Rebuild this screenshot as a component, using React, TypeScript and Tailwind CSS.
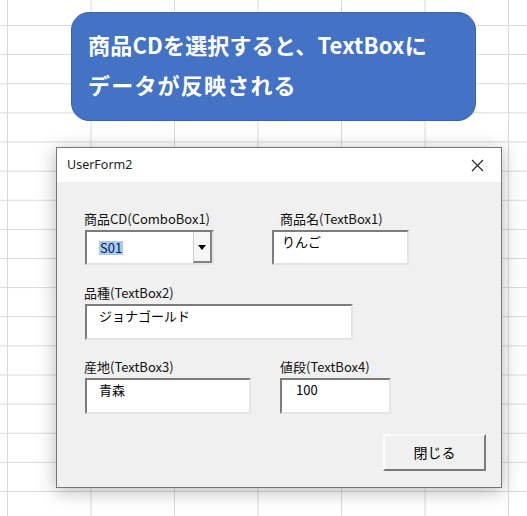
import React from 'react'

const jp = { fontFamily: '"Noto Sans CJK JP", "Noto Sans", sans-serif' }

// Sunken VBA-style textbox frame
function TextBox({ width, value, offset, height = 35 }: { width: number; value: string; offset: number; height?: number }) {
  return (
    <div
      className="border-2 border-[#e4e4e4] border-t-[#7c7c7c] border-l-[#7c7c7c] bg-white text-[13px] leading-[16px] text-black pt-[2px]"
      style={{ width, height, paddingLeft: offset }}
    >
      {value}
    </div>
  )
}

function Label({ children }: { children: React.ReactNode }) {
  return <div className="text-[13px] leading-[16px] text-[#111] whitespace-nowrap">{children}</div>
}

export default function App(): React.JSX.Element {
  return (
    <div
      className="flex flex-col w-[527px] h-[516px] overflow-hidden bg-white bg-[linear-gradient(to_right,#d9d9d9_1px,transparent_1px),linear-gradient(to_bottom,#d9d9d9_1px,transparent_1px)] bg-[length:83.5px_29.13px] bg-[position:7px_25px]"
      style={jp}
    >
      {/* Callout */}
      <div className="ml-[71px] mt-[12px] w-[405px] h-[109px] shrink-0 rounded-[18px] bg-[#4472c4] border border-[#3a63ad] pl-[16px] pt-[11px] text-white font-bold text-[22px] leading-[40px]">
        <div className="tracking-[0.2px]">商品CDを選択すると、TextBoxに</div>
        <div className="tracking-[1.2px]">データが反映される</div>
      </div>

      {/* UserForm */}
      <div className="ml-[56px] mt-[26px] w-[446px] h-[341px] shrink-0 flex flex-col border border-[#767676] bg-[#f0f0f0] shadow-[0_3px_18px_rgba(0,0,0,0.28)]">
        <div className="h-[34px] shrink-0 bg-white flex items-center justify-between pl-[10px] pr-[12px]">
          <span className="text-[12.5px] text-[#1e1e1e]" style={{ fontFamily: '"Noto Sans", sans-serif' }}>UserForm2</span>
          <svg width="13" height="13" viewBox="0 0 13 13" className="mr-[5px]">
            <path d="M1 1 L12 12 M12 1 L1 12" stroke="#2a2a2a" strokeWidth="1.2" fill="none" />
          </svg>
        </div>

        <div className="flex flex-col flex-1 pl-[27px]">
          {/* Row 1 */}
          <div className="flex mt-[29px]">
            <div className="w-[196px] flex flex-col">
              <Label>商品CD(ComboBox1)</Label>
              <div className="ml-[1px] mt-[3px] w-[129px] h-[35px] flex border-2 border-[#e4e4e4] border-t-[#7c7c7c] border-l-[#7c7c7c] bg-white">
                <div className="flex-1 pl-[12px] pt-[2px]">
                  <span className="bg-[#a3cdf0] text-[#15154a] text-[13px] leading-[14px] inline-block px-[1px]">S01</span>
                </div>
                <div className="w-[19px] flex items-center justify-center bg-[#f6f6f6] border-l border-[#cfcfcf] border-r-2 border-b-2 border-r-[#858585] border-b-[#858585]">
                  <svg width="8" height="5" viewBox="0 0 8 5" className="mt-[2px]">
                    <path d="M0 0 L8 0 L4 5 Z" fill="#000" />
                  </svg>
                </div>
              </div>
            </div>
            <div className="flex flex-col">
              <Label>商品名(TextBox1)</Label>
              <div className="-ml-[8px] mt-[3px]">
                <TextBox width={137} value="りんご" offset={8} />
              </div>
            </div>
          </div>

          {/* Row 2 */}
          <div className="flex flex-col mt-[20px]">
            <Label>品種(TextBox2)</Label>
            <div className="ml-[1px] mt-[3px]">
              <TextBox width={268} value="ジョナゴールド" offset={12} height={36} />
            </div>
          </div>

          {/* Row 3 */}
          <div className="flex mt-[19px]">
            <div className="w-[196px] flex flex-col">
              <Label>産地(TextBox3)</Label>
              <div className="ml-[1px] mt-[3px]">
                <TextBox width={166} value="青森" offset={12} height={36} />
              </div>
            </div>
            <div className="flex flex-col">
              <Label>値段(TextBox4)</Label>
              <div className="mt-[3px]">
                <TextBox width={111} value="100" offset={14} height={36} />
              </div>
            </div>
          </div>

          {/* Close button */}
          <div className="flex justify-end mt-[20px] pr-[15px]">
            <button className="w-[103px] h-[37px] bg-[#f0f0f0] border-2 border-t-[#fbfbfb] border-l-[#fbfbfb] border-r-[#7a7a7a] border-b-[#7a7a7a] text-[14px] text-black flex items-center justify-center">
              閉じる
            </button>
          </div>
        </div>
      </div>
    </div>
  )
}
